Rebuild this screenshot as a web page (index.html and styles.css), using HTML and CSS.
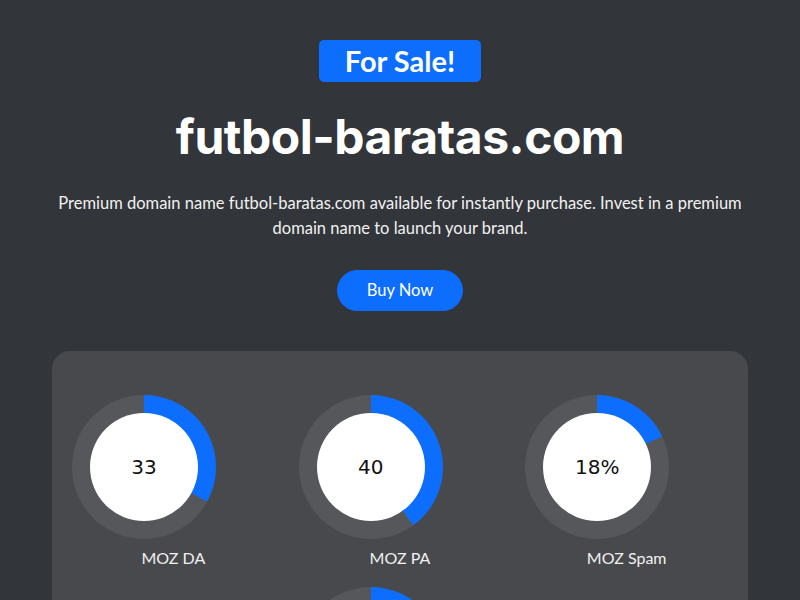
FILE: index.html
```html
<!DOCTYPE html>
<html lang="en">
<head>
  <meta charset="UTF-8">
  <meta name="viewport" content="width=device-width, initial-scale=1.0">
  <title>futbol-baratas.com</title>
  <link rel="stylesheet" href="styles.css">
</head>
<body>
  <div class="page">
    <div class="hero">
      <span class="badge">For Sale!</span>
      <h1>futbol-baratas.com</h1>
      <p>Premium domain name futbol-baratas.com available for instantly purchase. Invest in a premium domain name to launch your brand.</p>
      <a class="buy" href="#">Buy Now</a>
    </div>
    <div class="stats">
      <div class="row">
        <div class="col">
          <div class="gauge" style="--val: 33%"><div class="inner">33</div></div>
          <div class="label">MOZ DA</div>
        </div>
        <div class="col">
          <div class="gauge" style="--val: 40%"><div class="inner">40</div></div>
          <div class="label">MOZ PA</div>
        </div>
        <div class="col">
          <div class="gauge" style="--val: 18%"><div class="inner">18%</div></div>
          <div class="label">MOZ Spam</div>
        </div>
        <div class="col">
          <div class="gauge" style="--val: 25%"><div class="inner">25</div></div>
          <div class="label">Majestic TF</div>
        </div>
      </div>
    </div>
  </div>
</body>
</html>
```

FILE: styles.css
```css
* {
  margin: 0;
  padding: 0;
  box-sizing: border-box;
}
body {
  background-color: #323539;
  font-family: "Lato", "Noto Sans", sans-serif;
  color: #f1f1f1;
  overflow-x: hidden;
}
.page {
  width: 100vw;
  padding: 40px 52px 48px;
}
.hero {
  text-align: center;
}
.badge {
  display: inline-block;
  height: 42px;
  line-height: 42px;
  padding: 0 26px;
  background-color: #0d6efd;
  color: #fff;
  font-size: 29px;
  font-weight: 700;
  border-radius: 5px;
}
.hero h1 {
  margin-top: 26px;
  font-family: "Inter", sans-serif;
  font-size: 48px;
  font-weight: 700;
  letter-spacing: -0.5px;
  line-height: 58px;
  color: #fff;
}
.hero p {
  margin-top: 25px;
  font-size: 16.5px;
  line-height: 25px;
}
.buy {
  display: inline-block;
  margin-top: 29px;
  width: 126px;
  height: 41px;
  line-height: 41px;
  border-radius: 21px;
  background-color: #0d6efd;
  color: #fff;
  font-size: 16.5px;
  text-decoration: none;
}
.stats {
  margin-top: 40px;
  background-color: #47494c;
  border-radius: 18px;
  padding: 44px 8px 40px;
}
.row {
  display: flex;
  flex-wrap: wrap;
  justify-content: center;
  row-gap: 17px;
}
.col {
  width: 33.333%;
  padding: 0 12px;
}
.gauge {
  width: 144px;
  height: 144px;
  border-radius: 50%;
  background: conic-gradient(#0d6efd 0 var(--val), #55575a var(--val) 100%);
  display: flex;
  align-items: center;
  justify-content: center;
}
.inner {
  width: 108px;
  height: 108px;
  border-radius: 50%;
  background-color: #fff;
  color: #111;
  font-family: "DejaVu Sans", sans-serif;
  font-size: 20px;
  display: flex;
  align-items: center;
  justify-content: center;
}
.label {
  margin-top: 7px;
  text-align: center;
  font-size: 16px;
  line-height: 24px;
}
```
